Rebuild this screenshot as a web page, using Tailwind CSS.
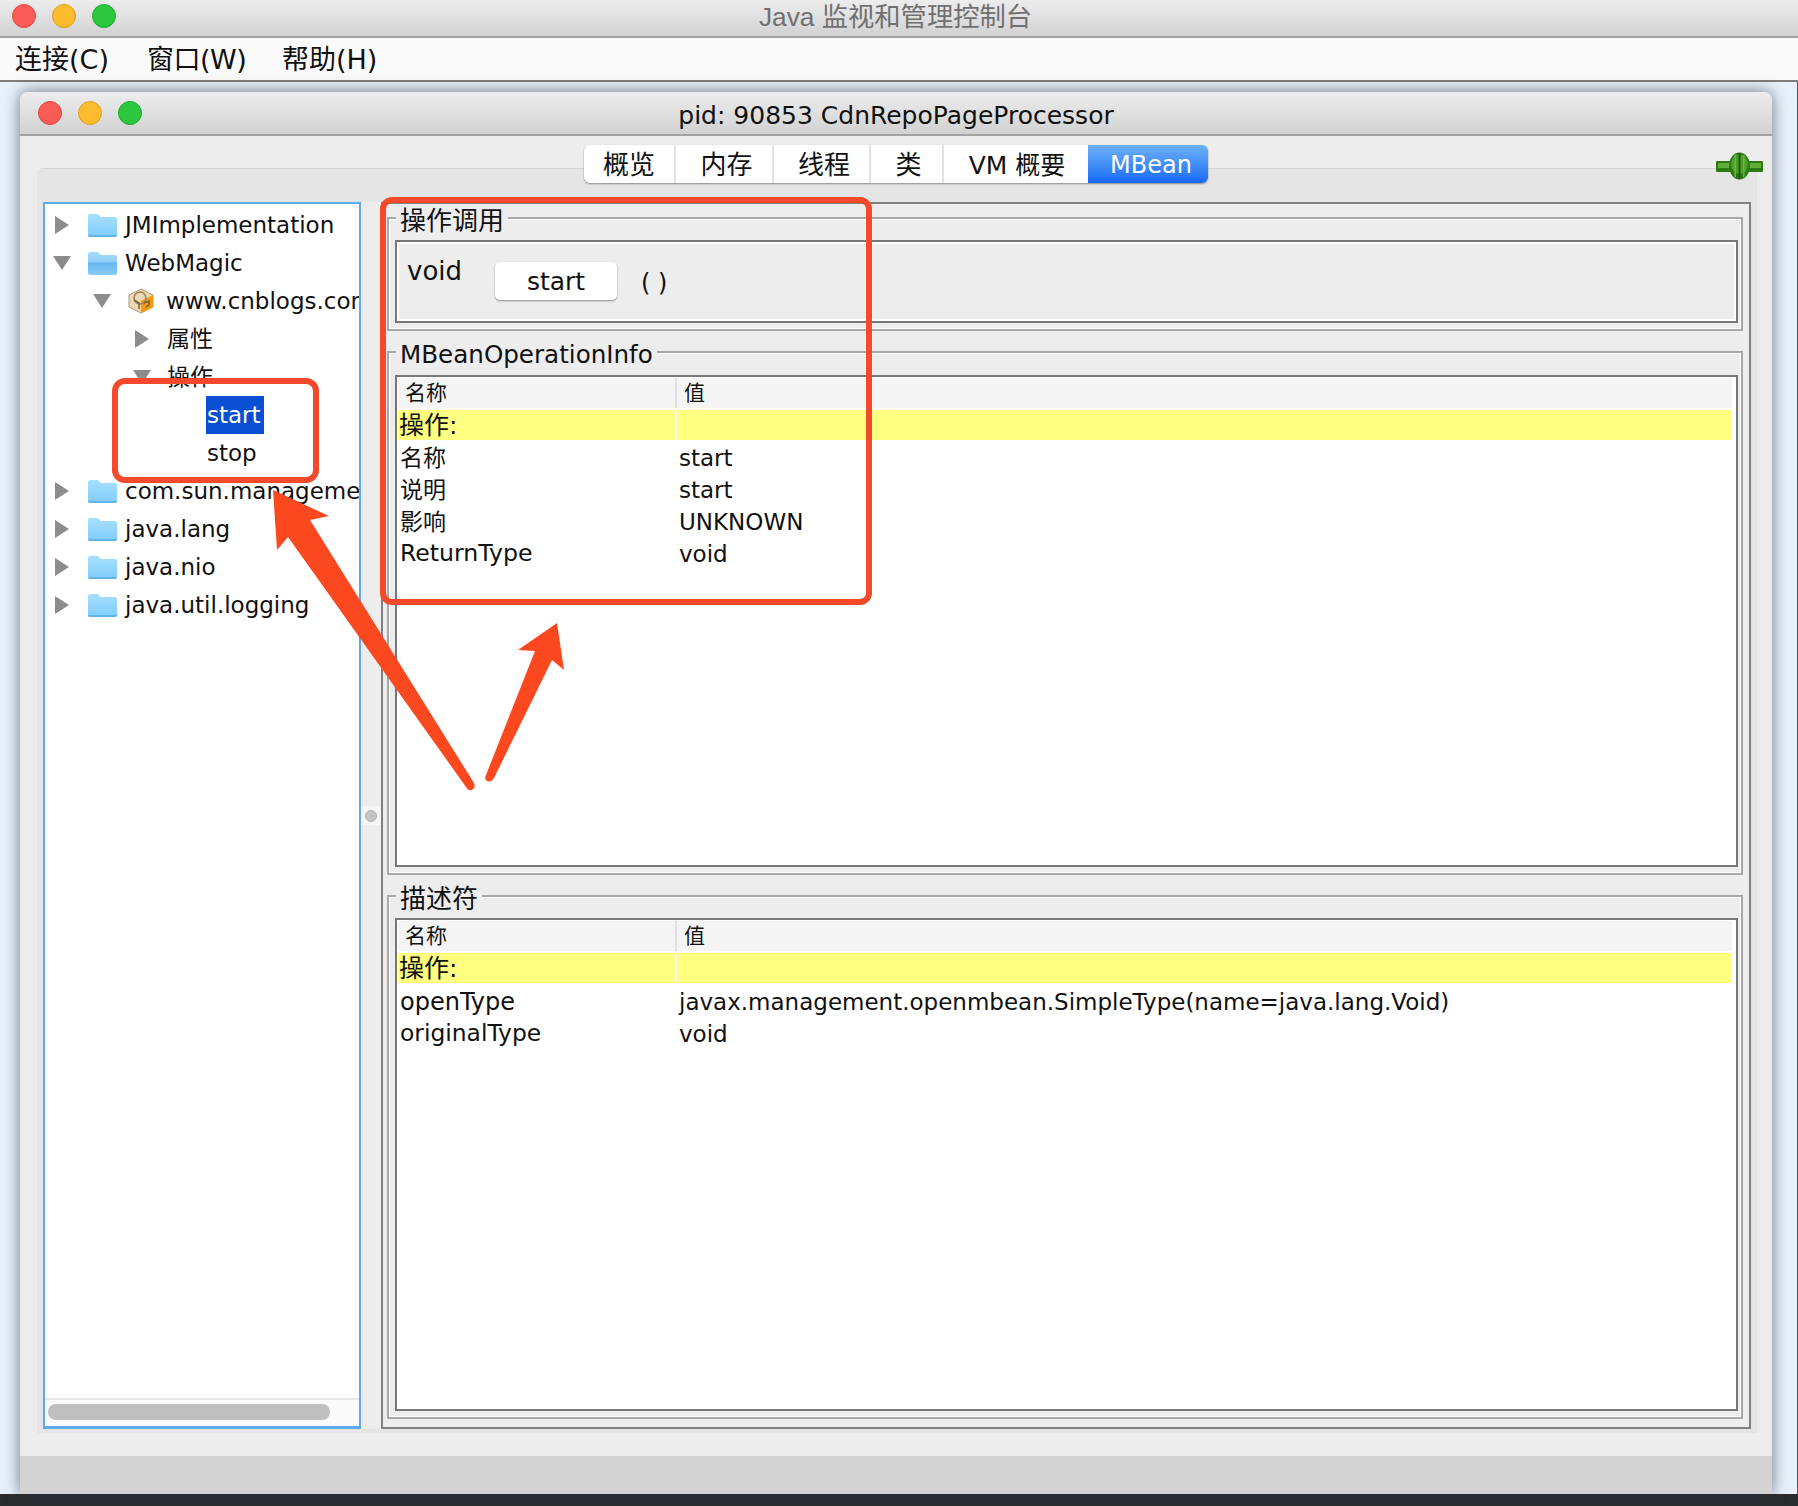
<!DOCTYPE html>
<html lang="zh">
<head>
  <meta charset="UTF-8">
  <title>Java 监视和管理控制台</title>
  <script src="https://cdn.jsdelivr.net/npm/@tailwindcss/browser@4"></script>
</head>
<body class="bg-[#2a2b2d] font-['DejaVu_Sans','Noto_Sans_CJK_SC',sans-serif] text-[#111]">
  <svg width="0" height="0" class="absolute">
    <defs>
      <linearGradient id="folderBody" x1="0" y1="0" x2="0" y2="1"><stop offset="0" stop-color="#a7e0fe"/><stop offset="1" stop-color="#7fcdfb"/></linearGradient>
      <linearGradient id="folderOpen" x1="0" y1="0" x2="0" y2="1"><stop offset="0" stop-color="#a5dcfb"/><stop offset=".42" stop-color="#8fd0f5"/><stop offset=".48" stop-color="#68b6ec"/><stop offset="1" stop-color="#86cdf8"/></linearGradient>
      <symbol id="folder" viewBox="0 0 30 24"><path d="M1 3q0-2 2-2h7q2 0 3 2l.6 1H28q2 0 2 2v16q0 2-2 2H3q-2 0-2-2z" fill="url(#folderBody)"/><path d="M1 22h29q0 2-2 2H3q-2 0-2-2z" fill="#62b4e8"/></symbol>
      <symbol id="folderO" viewBox="0 0 30 24"><path d="M1 3q0-2 2-2h7q2 0 3 2l.6 1H28q2 0 2 2v16q0 2-2 2H3q-2 0-2-2z" fill="url(#folderOpen)"/></symbol>
      <symbol id="triR" viewBox="0 0 14 18"><polygon points="0,0 14,9 0,18" fill="#8c8c8c"/></symbol>
      <symbol id="triD" viewBox="0 0 18 14"><polygon points="0,0 18,0 9,14" fill="#8c8c8c"/></symbol>
    </defs>
  </svg>

  <div class="relative w-[1798px] h-[1506px] overflow-hidden flex flex-col">
    <!-- outer title bar -->
    <div class="relative h-[38px] shrink-0 flex items-center justify-center bg-gradient-to-b from-[#ededed] to-[#d2d2d2] border-b-2 border-[#a2a2a2]">
      <div class="absolute left-[12px] top-[4px] flex gap-[16px]">
        <span class="w-[24px] h-[24px] rounded-full bg-[#fc5b57] border border-[#e2463f]"></span>
        <span class="w-[24px] h-[24px] rounded-full bg-[#fdbc2e] border border-[#dfa023]"></span>
        <span class="w-[24px] h-[24px] rounded-full bg-[#2bc83f] border border-[#1caa2b]"></span>
      </div>
      <span class="text-[26.3px] leading-none text-[#707070] font-['Liberation_Sans','Noto_Sans_CJK_SC',sans-serif] -mt-[2px] -ml-[7px]">Java 监视和管理控制台</span>
    </div>
    <!-- menu bar -->
    <div class="h-[44px] shrink-0 flex items-center bg-[#fafafa] border-b-2 border-[#7d7d7d] pl-[15px] pt-[1px] text-[27px] leading-none">
      <span class="w-[132px]">连接(C)</span>
      <span class="w-[135px] tracking-[-0.5px]">窗口(W)</span>
      <span>帮助(H)</span>
    </div>

    <!-- desktop -->
    <div class="flex-1 min-h-0 bg-[#e8f1fb] pl-[20px] pt-[10px] pr-[26px] border-r border-[#555]">
      <!-- inner window -->
      <div class="relative w-[1752px] h-[1402px] flex flex-col rounded-t-[8px] bg-[#ededed] shadow-[0_0_16px_rgba(40,50,60,0.65)]">
        <div class="relative h-[44px] shrink-0 flex items-center justify-center rounded-t-[8px] bg-gradient-to-b from-[#ededed] to-[#d2d2d2] border-b-2 border-[#a2a2a2]">
          <div class="absolute left-[18px] top-[9px] flex gap-[16px]">
            <span class="w-[24px] h-[24px] rounded-full bg-[#fc5b57] border border-[#e2463f]"></span>
            <span class="w-[24px] h-[24px] rounded-full bg-[#fdbc2e] border border-[#dfa023]"></span>
            <span class="w-[24px] h-[24px] rounded-full bg-[#2bc83f] border border-[#1caa2b]"></span>
          </div>
          <span class="text-[25px] leading-none mt-[4px]">pid: 90853 CdnRepoPageProcessor</span>
        </div>

        <!-- tabs -->
        <div class="relative z-10 shrink-0 mt-[9px] flex justify-center text-[26px] leading-none">
          <div class="flex h-[38px] rounded-[6px] bg-white shadow-[0_1px_2px_rgba(0,0,0,0.4)] overflow-hidden">
            <div class="w-[92px] pt-[2px] flex items-center justify-center border-r-2 border-[#e2e2e2]">概览</div>
            <div class="w-[98px] pt-[2px] pl-[5px] flex items-center justify-center border-r-2 border-[#e2e2e2]">内存</div>
            <div class="w-[97px] pt-[2px] pl-[5px] flex items-center justify-center border-r-2 border-[#e2e2e2]">线程</div>
            <div class="w-[73px] pt-[2px] pl-[4px] flex items-center justify-center border-r-2 border-[#e2e2e2]">类</div>
            <div class="w-[144px] pt-[2px] pl-[2px] flex items-center justify-center text-[25px]">VM 概要</div>
            <div class="w-[120px] pt-[2px] pl-[6px] flex items-center justify-center bg-gradient-to-b from-[#6cb0fb] to-[#1769f3] text-white text-[24px]">MBean</div>
          </div>
        </div>
        <svg class="absolute left-[1696px] top-[60px] z-10" width="47" height="28" viewBox="0 0 47 28">
          <rect x="0" y="9" width="47" height="11" rx="1" fill="#2e7a12"/>
          <rect x="2" y="11" width="43" height="5" fill="#62ad3a"/>
          <ellipse cx="23.5" cy="14" rx="10.5" ry="13.5" fill="#2c7a10"/>
          <ellipse cx="23.5" cy="12" rx="8.5" ry="10" fill="#4d9e24"/>
          <rect x="22.5" y="1" width="2" height="26" fill="#1d5a08"/>
          <rect x="18.5" y="3" width="1.5" height="22" fill="#6cb548"/>
          <rect x="27" y="3" width="1.5" height="22" fill="#6cb548"/>
        </svg>

        <!-- tab pane -->
        <div class="-mt-[15px] mx-[17px] w-[1720px] h-[1265px] shrink-0 bg-[#e5e5e5] border-t border-[#d4d4d4] rounded-t-[6px] pl-[6px] pr-[6px] pt-[33px] pb-[4px] flex">
          <!-- tree -->
          <div class="w-[318px] h-full shrink-0 flex flex-col bg-white border-2 border-b-[3px] border-[#5eaaee] overflow-hidden">
            <div class="flex-1 pt-[2px] text-[23px] leading-[38px] whitespace-nowrap overflow-hidden">
              <div class="flex items-center h-[38px]"><svg class="shrink-0 ml-[10px] w-[14px] h-[18px]"><use href="#triR"/></svg><svg class="shrink-0 ml-[18px] w-[30px] h-[24px]"><use href="#folder"/></svg><span class="ml-[8px]">JMImplementation</span></div>
              <div class="flex items-center h-[38px]"><svg class="shrink-0 ml-[8px] w-[18px] h-[14px]"><use href="#triD"/></svg><svg class="shrink-0 ml-[16px] w-[30px] h-[24px]"><use href="#folderO"/></svg><span class="ml-[8px]">WebMagic</span></div>
              <div class="flex items-center h-[38px]"><svg class="shrink-0 ml-[48px] w-[18px] h-[14px]"><use href="#triD"/></svg>
                <svg class="shrink-0 ml-[17px]" width="26" height="26" viewBox="0 0 26 26">
                  <polygon points="13,1 25,7 25,19 13,25 1,19 1,7" fill="#ecd9b2" stroke="#ab9a7a"/>
                  <polygon points="13,13 25,7 25,19 13,25" fill="#f39a10"/>
                  <circle cx="12" cy="10" r="6" fill="none" stroke="#9a8458" stroke-width="1.5"/>
                  <path d="M6 12l5 3v6M16 15l5-2v4l-3 2" fill="none" stroke="#7a6238" stroke-width="1.5"/>
                </svg>
                <span class="ml-[12px]">www.cnblogs.com</span></div>
              <div class="flex items-center h-[38px]"><svg class="shrink-0 ml-[90px] w-[14px] h-[18px]"><use href="#triR"/></svg><span class="ml-[18px]">属性</span></div>
              <div class="flex items-center h-[38px]"><svg class="shrink-0 ml-[88px] w-[18px] h-[14px]"><use href="#triD"/></svg><span class="ml-[16px]">操作</span></div>
              <div class="flex items-center h-[38px]"><span class="ml-[161px] pl-[1px] w-[58px] bg-[#0a4fd2] text-white">start</span></div>
              <div class="flex items-center h-[38px]"><span class="ml-[162px]">stop</span></div>
              <div class="flex items-center h-[38px]"><svg class="shrink-0 ml-[10px] w-[14px] h-[18px]"><use href="#triR"/></svg><svg class="shrink-0 ml-[18px] w-[30px] h-[24px]"><use href="#folder"/></svg><span class="ml-[8px]">com.sun.management</span></div>
              <div class="flex items-center h-[38px]"><svg class="shrink-0 ml-[10px] w-[14px] h-[18px]"><use href="#triR"/></svg><svg class="shrink-0 ml-[18px] w-[30px] h-[24px]"><use href="#folder"/></svg><span class="ml-[8px]">java.lang</span></div>
              <div class="flex items-center h-[38px]"><svg class="shrink-0 ml-[10px] w-[14px] h-[18px]"><use href="#triR"/></svg><svg class="shrink-0 ml-[18px] w-[30px] h-[24px]"><use href="#folder"/></svg><span class="ml-[8px]">java.nio</span></div>
              <div class="flex items-center h-[38px]"><svg class="shrink-0 ml-[10px] w-[14px] h-[18px]"><use href="#triR"/></svg><svg class="shrink-0 ml-[18px] w-[30px] h-[24px]"><use href="#folder"/></svg><span class="ml-[8px]">java.util.logging</span></div>
            </div>
            <div class="h-[28px] shrink-0 bg-[#fafafa] border-t-2 border-[#e8e8e8] pl-[3px] pt-[4px]">
              <div class="w-[282px] h-[16px] rounded-full bg-[#bfbfbf]"></div>
            </div>
          </div>

          <!-- splitter -->
          <div class="w-[20px] h-full shrink-0 bg-[#ededed] flex items-center">
            <div class="w-full h-[19px] bg-[#f5f5f5] flex items-center justify-center">
              <span class="w-[12px] h-[12px] rounded-full bg-[#c4c4c4] border border-[#b0b0b0]"></span>
            </div>
          </div>

          <!-- right side -->
          <div class="w-[1370px] h-full shrink-0 bg-[#ededed] border-2 border-[#808080] pl-[4px] pr-[6px] flex flex-col gap-[7px] text-[23px] leading-none">
            <fieldset class="border-2 border-[#a8a8a8] shadow-[inset_0_0_0_1px_#fff] pl-[6px] pr-[3px] pt-[8px] pb-[6px]">
              <legend class="ml-[1px] h-[28px] px-[4px] bg-[#ededed] text-[26px] leading-[34px]">操作调用</legend>
              <div class="h-[83px] bg-[#ededed] border-2 border-[#777] shadow-[inset_0_0_0_2px_#fff] flex">
                <span class="ml-[10px] mt-[16px] text-[26px]">void</span>
                <div class="ml-[33px] mt-[20px] w-[122px] h-[38px] rounded-[5px] bg-white shadow-[0_1px_2px_rgba(0,0,0,0.4)] flex items-center justify-center text-[25px]">start</div>
                <span class="ml-[24px] mt-[29px] text-[24px]">( )</span>
              </div>
            </fieldset>

            <fieldset class="border-2 border-[#a8a8a8] shadow-[inset_0_0_0_1px_#fff] pl-[6px] pr-[3px] pt-[9px] pb-[6px]">
              <legend class="ml-[1px] h-[28px] px-[4px] bg-[#ededed] text-[24.6px] leading-[34px]">MBeanOperationInfo</legend>
              <div class="h-[492px] bg-white border-2 border-[#777] p-[1px] pr-[4px]">
                <div class="grid grid-cols-[279px_1fr] h-[30px] bg-[#f5f5f5] text-[21px] items-center">
                  <span class="pl-[7px] h-full flex items-center border-r-2 border-[#e0e0e0]">名称</span>
                  <span class="pl-[7px]">值</span>
                </div>
                <div class="grid grid-cols-[279px_1fr] h-[30px] mt-[2px] text-[25px] items-center">
                  <span class="h-full pl-[1px] flex items-center bg-[#ffff80] border-r-2 border-white">操作:</span>
                  <span class="h-full bg-[#ffff80]"></span>
                </div>
                <div class="grid grid-cols-[279px_1fr] h-[32px] mt-[2px] pl-[2px] items-center"><span>名称</span><span>start</span></div>
                <div class="grid grid-cols-[279px_1fr] h-[32px] pl-[2px] items-center"><span>说明</span><span>start</span></div>
                <div class="grid grid-cols-[279px_1fr] h-[32px] pl-[2px] items-center"><span>影响</span><span>UNKNOWN</span></div>
                <div class="grid grid-cols-[279px_1fr] h-[32px] pl-[2px] items-center"><span class="text-[23.6px]">ReturnType</span><span>void</span></div>
              </div>
            </fieldset>

            <fieldset class="border-2 border-[#a8a8a8] shadow-[inset_0_0_0_1px_#fff] pl-[6px] pr-[3px] pt-[8px] pb-[6px]">
              <legend class="ml-[1px] h-[28px] px-[4px] bg-[#ededed] text-[26px] leading-[34px]">描述符</legend>
              <div class="h-[493px] bg-white border-2 border-[#777] p-[1px] pr-[4px]">
                <div class="grid grid-cols-[279px_1fr] h-[30px] bg-[#f5f5f5] text-[21px] items-center">
                  <span class="pl-[7px] h-full flex items-center border-r-2 border-[#e0e0e0]">名称</span>
                  <span class="pl-[7px]">值</span>
                </div>
                <div class="grid grid-cols-[279px_1fr] h-[30px] mt-[2px] text-[25px] items-center">
                  <span class="h-full pl-[1px] flex items-center bg-[#ffff80] border-r-2 border-white">操作:</span>
                  <span class="h-full bg-[#ffff80]"></span>
                </div>
                <div class="grid grid-cols-[279px_1fr] h-[32px] mt-[3px] pl-[2px] items-center"><span class="text-[24px]">openType</span><span>javax.management.openmbean.SimpleType(name=java.lang.Void)</span></div>
                <div class="grid grid-cols-[279px_1fr] h-[32px] pl-[2px] items-center"><span class="text-[23.4px]">originalType</span><span>void</span></div>
              </div>
            </fieldset>
          </div>
        </div>

        <!-- bottom strip -->
        <div class="mt-[23px] h-[38px] shrink-0 bg-[#d2d2d2]"></div>
      </div>
    </div>
    <div class="h-[12px] shrink-0 bg-[#2a2b2d]"></div>

    <!-- red annotations drawn over the screenshot -->
    <svg class="absolute left-0 top-0 pointer-events-none" width="1798" height="1506" viewBox="0 0 1798 1506">
      <rect x="383" y="200" width="486" height="402" rx="9" fill="none" stroke="#f4492a" stroke-width="6"/>
      <rect x="115" y="381" width="201" height="99" rx="10" fill="none" stroke="#f4492a" stroke-width="6"/>
      <path d="M273 490L329 516L310 520L474 783Q476 788 472 790Q468 791 466 787L288 537L277 550Z" fill="#fb481e"/>
      <path d="M557 623L564 670L552 660L494 778Q491 783 487 781Q484 779 486 775L535 651L518 650Z" fill="#fb481e"/>
    </svg>
  </div>
</body>
</html>
